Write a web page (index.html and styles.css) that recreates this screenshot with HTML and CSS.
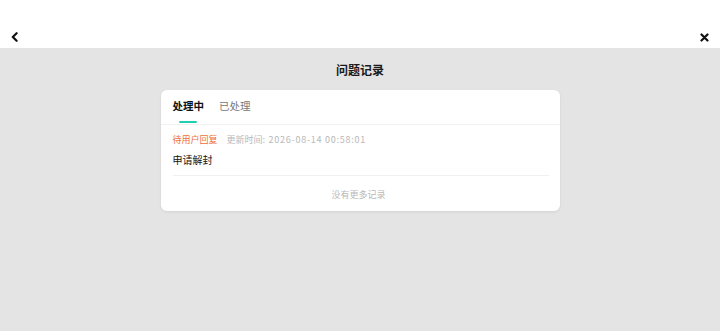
FILE: index.html
```html
<!DOCTYPE html>
<html lang="zh-CN">
<head>
<meta charset="utf-8">
<link rel="stylesheet" href="styles.css">
</head>
<body>
<header class="topbar">
  <svg class="icon" width="8" height="10" viewBox="0 0 8 10"><path d="M5.6 1.2 L1.8 5 L5.6 8.8" fill="none" stroke="#111" stroke-width="2.2" stroke-linecap="round" stroke-linejoin="round"/></svg>
  <svg class="icon" width="9" height="9" viewBox="0 0 9 9"><path d="M1.5 1.5 L7.5 7.5 M7.5 1.5 L1.5 7.5" fill="none" stroke="#111" stroke-width="2.2" stroke-linecap="round"/></svg>
</header>
<h1 class="title">问题记录</h1>
<section class="card">
  <nav class="tabs">
    <span class="tab active">处理中</span>
    <span class="tab">已处理</span>
  </nav>
  <div class="list">
    <div class="item">
      <div class="meta"><span class="status">待用户回复</span><span class="time">更新时间<span class="num">: 2026-08-14 00:58:01</span></span></div>
      <div class="name">申请解封</div>
    </div>
    <div class="more">没有更多记录</div>
  </div>
</section>
</body>
</html>
```
FILE: styles.css
```css
* { box-sizing: border-box; }
html, body { margin: 0; padding: 0; }
body {
  background: #e4e4e4;
  font-family: "PingFang SC", "Noto Sans CJK SC", "Noto Sans", sans-serif;
  color: #111;
  height: 331px;
  overflow: hidden;
}
.topbar {
  height: 48px;
  background: #fff;
  display: flex;
  justify-content: space-between;
  align-items: flex-end;
  padding: 0 11px 6px 11px;
}
.icon { display: block; }
.title {
  margin: 0;
  padding-top: 13px;
  height: 42px;
  text-align: center;
  font-size: 12px;
  line-height: 18px;
  font-weight: 700;
  color: #1a1a1a;
}
.card {
  width: 399px;
  margin: 0 auto;
  background: #fff;
  border-radius: 6px;
  box-shadow: 0 1px 3px rgba(0,0,0,0.08);
}
.tabs {
  height: 35px;
  display: flex;
  gap: 15px;
  padding: 8px 0 0 12px;
  border-bottom: 1px solid #f1f1f1;
}
.tab {
  position: relative;
  font-size: 10.5px;
  line-height: 16px;
  color: #777;
}
.tab.active { color: #111; font-weight: 700; }
.tab.active::after {
  content: "";
  position: absolute;
  left: 50%;
  top: 23px;
  width: 18px;
  height: 2px;
  margin-left: -9px;
  background: #1fcfb2;
  border-radius: 1px;
}
.list { padding: 0 11px 0 12px; }
.item {
  padding-top: 8px;
  height: 51px;
  border-bottom: 1px solid #f0f0f0;
}
.meta {
  display: flex;
  gap: 9px;
  font-size: 9px;
  line-height: 14px;
}
.status { color: #f06d3c; }
.time { color: #b8b8b8; }
.num { letter-spacing: 0.75px; }
.name {
  margin-top: 5px;
  font-size: 10px;
  line-height: 15px;
  color: #111;
}
.more {
  height: 35px;
  text-align: center;
  font-size: 9px;
  line-height: 14px;
  padding-top: 12px;
  padding-right: 4px;
  color: #b8b8b8;
}
```
